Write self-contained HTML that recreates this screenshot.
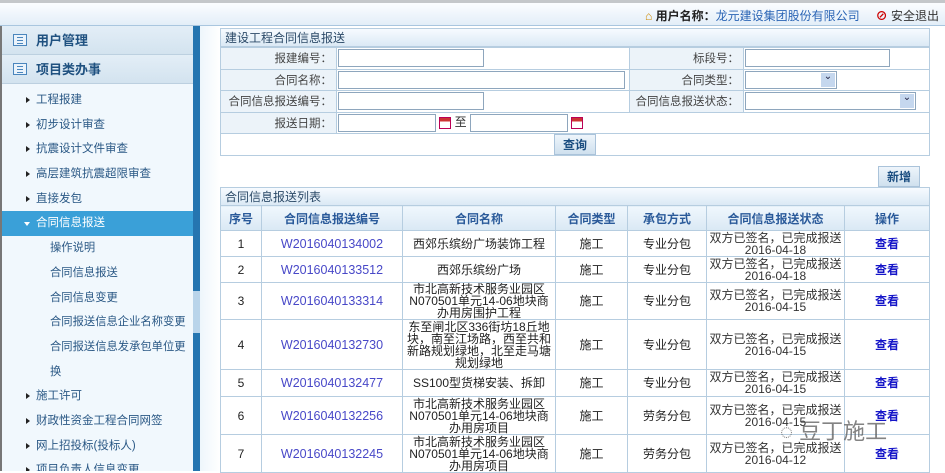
<!DOCTYPE html>
<html><head><meta charset="utf-8">
<style>
*{margin:0;padding:0;box-sizing:border-box}
body{width:945px;height:471px;overflow:hidden;background:#fff;font-family:"Liberation Sans","Noto Sans CJK SC",sans-serif;font-size:12px;color:#333;position:relative}
.top{position:absolute;left:0;top:0;width:945px;height:26px;background:linear-gradient(#fbfdff,#e3eef8);border-top:3px solid #c4c7ca;border-bottom:1px solid #a9c6df}
.user{position:absolute;right:6px;top:4px;font-size:12px;white-space:nowrap}
.user b{color:#222}
.user a{color:#2b65b5;margin-right:16px}
.side{position:absolute;left:0;top:26px;width:193px;height:445px;background:#f1f8fd;border-left:2px solid #777;overflow:hidden}
.hd{height:29px;line-height:29px;background:linear-gradient(#e3eef7,#d3e3ef);border-bottom:1px solid #bcd0e0;font-weight:bold;color:#1f5180;font-size:13px;padding-left:34px;position:relative}
.hd i{position:absolute;left:11px;top:8px;width:14px;height:12px;border:1px solid #4a86bd;background:#eaf3fb}
.hd i:before{content:"";position:absolute;left:3px;top:2px;width:6px;height:1px;background:#4a86bd;box-shadow:0 3px #4a86bd,0 6px #4a86bd}
.it{height:24.7px;line-height:24.7px;padding-left:34px;color:#2a5885;position:relative;font-size:11.5px;white-space:nowrap}
.it:before{content:"";position:absolute;left:24px;top:9px;border-left:4px solid #222;border-top:3.5px solid transparent;border-bottom:3.5px solid transparent}
.it.act{background:#3aa0d8;color:#fff}
.it.act:before{left:22px;top:11px;border-top:4px solid #fff;border-left:3.5px solid transparent;border-right:3.5px solid transparent;border-bottom:0}
.sub{height:24.7px;line-height:24.7px;padding-left:48px;color:#2a5885;font-size:11.3px;white-space:nowrap}
.split{position:absolute;left:193px;top:26px;width:7px;height:445px;background:#2575b0}
.split i{position:absolute;left:0;top:265px;width:7px;height:42px;background:#b9d4ea}
.main{position:absolute;left:200px;top:26px;width:745px;height:445px;background:linear-gradient(90deg,#eef6fc,#fff 20px)}
table{border-collapse:collapse;position:absolute;left:220px;table-layout:fixed}
td,th{border:1px solid #b6cde0;padding:0}
.form td{height:21.5px}
.lab{background:#ecf3f9;text-align:right;padding-right:4px !important;color:#444;white-space:nowrap;font-size:11.5px}
input.t{height:18px;border:1px solid #8ea6bd;vertical-align:middle}
.cap{position:absolute;left:220px;width:710px;height:19px;line-height:19px;background:linear-gradient(#f7fbff,#dbe9f5);border:1px solid #b6cde0;padding-left:4px;color:#2c4a68;font-size:12px}
.sel{display:inline-block;vertical-align:middle;height:18px;border:1px solid #8ea6bd;position:relative;background:#fff}
.sel:after{content:"⌄";position:absolute;right:1px;top:1px;width:14px;height:14px;background:#c5d7ee;font-size:10px;line-height:8px;text-align:center;color:#224}
.cal{display:inline-block;width:12px;height:12px;border:1px solid #b05;background:linear-gradient(#c33 35%,#fff 35%);vertical-align:middle}
.btn{display:inline-block;padding:1px 8px;background:linear-gradient(#eef5fb,#cfe0ee);border:1px solid #aac3da;color:#1a4d80;font-weight:bold}
.list th{height:25px;background:linear-gradient(#f0f7fd,#d9e8f4);color:#2a5a9a;font-weight:bold;font-size:12px}
.list td{text-align:center;font-size:12px;line-height:12px;color:#222;overflow:hidden}
.list td.no{color:#4848c8;font-size:12.5px}
.list td.v{color:#1515c8;font-weight:bold}
.list td.d{color:#333}
</style></head><body>
<div class="top"><div class="user"><span style="color:#c80">⌂</span> <b>用户名称：</b><a>龙元建设集团股份有限公司</a><span style="color:#c00;font-weight:bold">⊘</span> 安全退出</div></div>
<div class="side">
<div class="hd"><i></i>用户管理</div>
<div class="hd"><i></i>项目类办事</div>
<div style="height:4px"></div>
<div class="it">工程报建</div>
<div class="it">初步设计审查</div>
<div class="it">抗震设计文件审查</div>
<div class="it">高层建筑抗震超限审查</div>
<div class="it">直接发包</div>
<div class="it act">合同信息报送</div>
<div class="sub">操作说明</div>
<div class="sub">合同信息报送</div>
<div class="sub">合同信息变更</div>
<div class="sub">合同报送信息企业名称变更</div>
<div class="sub">合同报送信息发承包单位更</div>
<div class="sub">换</div>
<div class="it">施工许可</div>
<div class="it">财政性资金工程合同网签</div>
<div class="it">网上招投标(投标人)</div>
<div class="it">项目负责人信息变更</div>
</div>
<div class="split"><i></i></div>
<div class="main"></div>
<div class="cap" style="top:28px">建设工程合同信息报送</div>
<table class="form" style="top:47px;width:710px">
<tr><td class="lab" style="width:116px">报建编号：</td><td style="width:293px"><input class="t" style="width:146px;margin-left:1px"></td><td class="lab" style="width:114px">标段号：</td><td><input class="t" style="width:145px;margin-left:1px"></td></tr>
<tr><td class="lab">合同名称：</td><td><input class="t" style="width:287px;margin-left:1px"></td><td class="lab">合同类型：</td><td><span class="sel" style="width:92px;margin-left:1px"></span></td></tr>
<tr><td class="lab">合同信息报送编号：</td><td><input class="t" style="width:146px;margin-left:1px"></td><td class="lab">合同信息报送状态：</td><td><span class="sel" style="width:171px;margin-left:1px"></span></td></tr>
<tr><td class="lab">报送日期：</td><td colspan="3" style="border-right:1px solid #b6cde0"><input class="t" style="width:98px;margin-left:1px"> <span class="cal"></span> 至 <input class="t" style="width:98px"> <span class="cal"></span></td></tr>
<tr><td colspan="4" style="text-align:center;height:19px"><span class="btn">查询</span></td></tr>
</table>
<div class="btn" style="position:absolute;left:878px;top:166px">新增</div>
<div class="cap" style="top:187px">合同信息报送列表</div>
<table class="list" style="top:205px;width:710px">
<tr><th style="width:41px">序号</th><th style="width:141px">合同信息报送编号</th><th style="width:153px">合同名称</th><th style="width:72px">合同类型</th><th style="width:79px">承包方式</th><th style="width:138px">合同信息报送状态</th><th>操作</th></tr>
<tr style="height:26px"><td>1</td><td class="no">W2016040134002</td><td>西郊乐缤纷广场装饰工程</td><td>施工</td><td>专业分包</td><td class="d">双方已签名，已完成报送<br>2016-04-18</td><td class="v">查看</td></tr>
<tr style="height:26px"><td>2</td><td class="no">W2016040133512</td><td>西郊乐缤纷广场</td><td>施工</td><td>专业分包</td><td class="d">双方已签名，已完成报送<br>2016-04-18</td><td class="v">查看</td></tr>
<tr style="height:36px"><td>3</td><td class="no">W2016040133314</td><td>市北高新技术服务业园区<br>N070501单元14-06地块商<br>办用房围护工程</td><td>施工</td><td>专业分包</td><td class="d">双方已签名，已完成报送<br>2016-04-15</td><td class="v">查看</td></tr>
<tr style="height:50px"><td>4</td><td class="no">W2016040132730</td><td>东至闸北区336街坊18丘地<br>块，南至江场路，西至共和<br>新路规划绿地，北至走马塘<br>规划绿地</td><td>施工</td><td>专业分包</td><td class="d">双方已签名，已完成报送<br>2016-04-15</td><td class="v">查看</td></tr>
<tr style="height:27px"><td>5</td><td class="no">W2016040132477</td><td>SS100型货梯安装、拆卸</td><td>施工</td><td>专业分包</td><td class="d">双方已签名，已完成报送<br>2016-04-15</td><td class="v">查看</td></tr>
<tr style="height:38px"><td>6</td><td class="no">W2016040132256</td><td>市北高新技术服务业园区<br>N070501单元14-06地块商<br>办用房项目</td><td>施工</td><td>劳务分包</td><td class="d">双方已签名，已完成报送<br>2016-04-15</td><td class="v">查看</td></tr>
<tr style="height:38px"><td>7</td><td class="no">W2016040132245</td><td>市北高新技术服务业园区<br>N070501单元14-06地块商<br>办用房项目</td><td>施工</td><td>劳务分包</td><td class="d">双方已签名，已完成报送<br>2016-04-12</td><td class="v">查看</td></tr>
</table>
<div style="position:absolute;left:780px;top:414px;font-size:22px;color:rgba(90,90,90,.75);white-space:nowrap">◌ 豆丁施工</div>
</body></html>
